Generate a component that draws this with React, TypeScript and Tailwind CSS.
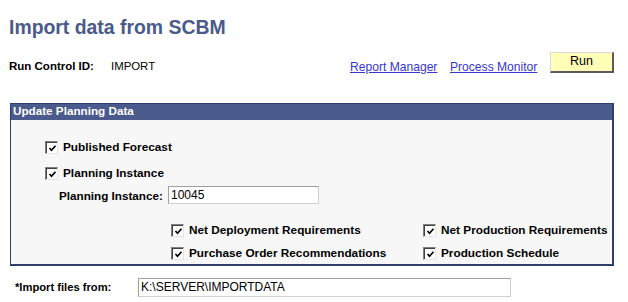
import React from "react";

function Check() {
  return (
    <div className="w-[13px] h-[13px] shrink-0 border-t border-l border-[#808080] border-r border-b border-r-[#e4e4e4] border-b-[#e4e4e4] bg-white">
      <div className="w-full h-full border-t border-l border-t-[#404040] border-l-[#404040] flex items-center justify-center">
        <svg width="9" height="9" viewBox="0 0 9 9">
          <polyline points="1.5,4 3.5,6.2 7.5,1.8" fill="none" stroke="#000" strokeWidth="1.7" />
        </svg>
      </div>
    </div>
  );
}

function CheckRow({ label, className = "" }: { label: string; className?: string }) {
  return (
    <div className={"flex items-center h-[13px] gap-[5px] " + className}>
      <Check />
      <span className="text-[11.8px] leading-[13px] font-bold text-black whitespace-nowrap">{label}</span>
    </div>
  );
}

export default function App() {
  return (
    <div className="w-[628px] h-[302px] bg-white overflow-hidden font-['Liberation_Sans',Arial,sans-serif] text-black">
      <div className="pl-[9px] pt-[16px] text-[19.4px] leading-[22px] font-bold text-[#4a5a8c]">
        Import data from SCBM
      </div>

      <div className="mt-[14px] flex h-[21px] items-start">
        <div className="ml-[9px] mt-[7px] w-[102px] text-[11.5px] leading-[14px] font-bold">Run Control ID:</div>
        <div className="mt-[7px] text-[11.4px] leading-[14px]">IMPORT</div>
        <div className="ml-auto flex items-start">
          <div className="w-[100px] mt-[8px] text-[12.1px] leading-[14px]">
            <a href="#" className="text-[#3535d2] underline">Report Manager</a>
          </div>
          <div className="w-[100px] mt-[8px] text-[12.1px] leading-[14px]">
            <a href="#" className="text-[#3535d2] underline">Process Monitor</a>
          </div>
          <button className="w-[64px] h-[21px] mr-[14px] bg-[#ffffb8] border-t border-l border-t-[#d8d8d8] border-l-[#d8d8d8] border-r-2 border-b-2 border-r-[#5a5a5a] border-b-[#5a5a5a] text-[12.5px] leading-[14px] text-black flex items-center justify-center pb-[2px]">
            Run
          </button>
        </div>
      </div>

      <div className="mt-[30px] ml-[10px] w-[604px] border-t border-l border-r-2 border-b-2 border-[#2e3f6e]">
        <div className="h-[16px] bg-[#4a5a8c] text-white text-[11.7px] leading-[13px] font-bold pl-[2px]">
          Update Planning Data
        </div>
        <div className="bg-[#f7f7f7] h-[144px] pt-[21px]">
          <CheckRow label="Published Forecast" className="pl-[34px]" />
          <CheckRow label="Planning Instance" className="pl-[34px] mt-[13px]" />
          <div className="flex items-center h-[18px] mt-[6px] pl-[48px]">
            <div className="w-[109px] text-[11.7px] leading-[13px] font-bold">Planning Instance:</div>
            <div className="w-[151px] h-[18px] bg-white border border-[#a0a0a0] border-r-[#d0d0d0] border-b-[#d0d0d0] text-[12px] leading-[16px] pl-[2px]">
              10045
            </div>
          </div>
          <div className="mt-[20px] pl-[160px] flex">
            <CheckRow label="Net Deployment Requirements" className="w-[252px]" />
            <CheckRow label="Net Production Requirements" />
          </div>
          <div className="mt-[10px] pl-[160px] flex">
            <CheckRow label="Purchase Order Recommendations" className="w-[252px]" />
            <CheckRow label="Production Schedule" />
          </div>
        </div>
      </div>

      <div className="mt-[12px] flex items-center h-[19px] pl-[15px]">
        <div className="w-[123px] text-[11.2px] leading-[13px] font-bold">*Import files from:</div>
        <div className="w-[373px] h-[19px] bg-white border border-[#a0a0a0] border-r-[#d0d0d0] border-b-[#d0d0d0] text-[12px] leading-[17px] pl-[2px]">
          K:\SERVER\IMPORTDATA
        </div>
      </div>
    </div>
  );
}
